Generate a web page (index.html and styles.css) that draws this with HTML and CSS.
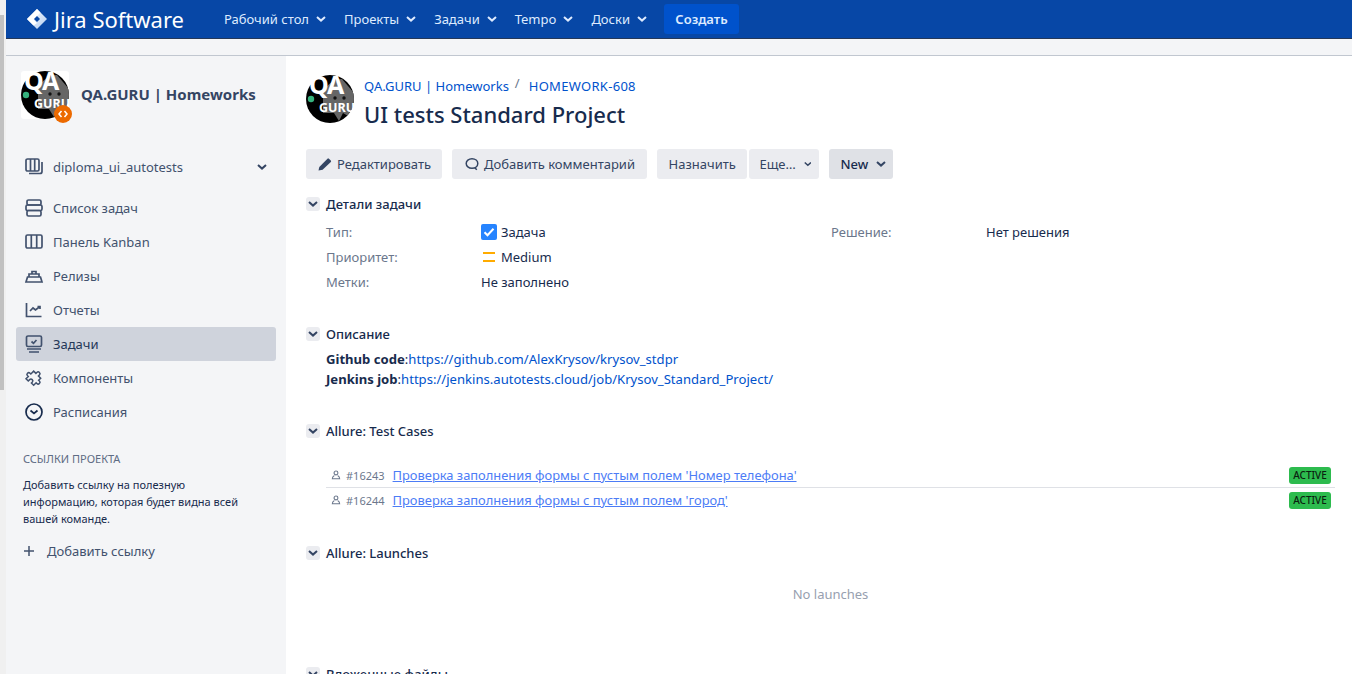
FILE: index.html
```html
<!DOCTYPE html>
<html lang="en">
<head>
  <meta charset="UTF-8" />
  <title>UI tests Standard Project</title>
  <link rel="stylesheet" href="styles.css">
</head>
<body>
  <svg class="svg-defs" width="0" height="0">
    <defs>
      <clipPath id="qa-clip"><circle cx="24" cy="24" r="24"/></clipPath>
      <linearGradient id="jira-fade" x1="0" y1="0" x2="1" y2="1">
        <stop offset="0" stop-color="#fff"/>
        <stop offset="1" stop-color="#b3cdf0"/>
      </linearGradient>
      <g id="qa-logo">
        <circle cx="24" cy="24" r="24" fill="#000"/>
        <path clip-path="url(#qa-clip)" d="M17 18 C20 10 28 4 36 4 L48 18 L48 32 L42 41 L37 38 L33 46 L28 38 L17 38 Z" fill="#666"/>
        <circle cx="5" cy="24" r="3.200" fill="#36b37e"/>
        <circle cx="29" cy="23" r="1.700" fill="#111"/>
        <circle cx="38" cy="23" r="1.700" fill="#111"/>
        <text x="3" y="19" class="logo-qa">Q</text>
        <text x="21" y="19" class="logo-qa">A</text>
        <text x="13" y="37" class="logo-guru">GURU</text>
      </g>
    </defs>
  </svg>

  <div class="gutter"><div class="gutter-thumb"></div></div>

  <div class="app">
    <header class="topbar">
      <a class="brand">
        <svg class="brand-icon" viewBox="0 0 22 22"><path d="M11 1 L21 11 L11 21 L1 11 Z" fill="url(#jira-fade)"/><path d="M11 1 L14.500 4.500 L7.500 11.500 L11 15 L7.500 17.500 L1 11 Z" fill="#fff"/><path d="M11 8 L14 11 L11 14 L8 11 Z" fill="#0747a6"/></svg>
        <span>Jira Software</span>
      </a>
      <nav class="topnav">
        <a>Рабочий стол <svg class="chev" viewBox="0 0 10 6"><path d="M1 1l4 3.6L9 1"/></svg></a>
        <a>Проекты <svg class="chev" viewBox="0 0 10 6"><path d="M1 1l4 3.6L9 1"/></svg></a>
        <a>Задачи <svg class="chev" viewBox="0 0 10 6"><path d="M1 1l4 3.6L9 1"/></svg></a>
        <a>Tempo <svg class="chev" viewBox="0 0 10 6"><path d="M1 1l4 3.6L9 1"/></svg></a>
        <a>Доски <svg class="chev" viewBox="0 0 10 6"><path d="M1 1l4 3.6L9 1"/></svg></a>
      </nav>
      <button class="create-btn">Создать</button>
    </header>
    <div class="subbar"></div>

    <div class="content">
      <aside class="sidebar">
        <div class="project">
          <div class="project-avatar">
            <svg width="48" height="48" viewBox="0 0 48 48"><use href="#qa-logo"/></svg>
            <span class="project-badge"><svg width="12" height="12" viewBox="0 0 12 12"><path d="M4.500 3 L2 6 L4.500 9 M7.500 3 L10 6 L7.500 9"/></svg></span>
          </div>
          <span class="project-name">QA.GURU | Homeworks</span>
        </div>

        <div class="board-select">
          <svg class="nav-icon" viewBox="0 0 20 20"><rect x="2" y="2" width="13" height="12" rx="1.500"/><path d="M6.500 2v12M10.700 2v12M18 5v9.500a2 2 0 0 1-2 2H5"/></svg>
          <span class="board-name">diploma_ui_autotests</span>
          <svg class="chev dark" viewBox="0 0 10 6"><path d="M1 1l4 3.6L9 1"/></svg>
        </div>

        <ul class="side-nav">
          <li><svg class="nav-icon" viewBox="0 0 20 20"><rect x="3" y="2" width="14" height="5" rx="1.500"/><rect x="2" y="7" width="16" height="5.500" rx="1.500"/><rect x="3" y="12.500" width="14" height="5.500" rx="1.500"/></svg>Список задач</li>
          <li><svg class="nav-icon" viewBox="0 0 20 20"><rect x="2" y="3" width="16" height="13" rx="1.500"/><path d="M7.300 3v13M12.700 3v13"/></svg>Панель Kanban</li>
          <li><svg class="nav-icon" viewBox="0 0 20 20"><path d="M2 16h16l-1.500-5h-13zM5 11V8h10v3M8 8V5.500h4V8"/></svg>Релизы</li>
          <li><svg class="nav-icon" viewBox="0 0 20 20"><path d="M2.500 3v13.500h15M6 11l3-3 2.500 2L16 6.500M13.500 6.500H16V9"/></svg>Отчеты</li>
          <li class="active"><svg class="nav-icon" viewBox="0 0 20 20"><rect x="2.500" y="2" width="15" height="10.500" rx="1.500"/><path d="M7.500 7.500l2 1.800 3-3.300M3 15h14M5 18h10"/></svg>Задачи</li>
          <li><svg class="nav-icon" viewBox="0 0 20 20"><path d="M8 3.500a2 2 0 0 1 4 0V5h3.500v3.200h1.200a2 2 0 0 1 0 4h-1.200V16H12v-1.200a2 2 0 0 0-4 0V17H4.500v-3.500H3.300a2 2 0 0 1 0-4h1.200V5H8z" transform="rotate(45 10 10) scale(.9) translate(1 1)"/></svg>Компоненты</li>
          <li><svg class="nav-icon black" viewBox="0 0 20 20"><circle cx="10" cy="10" r="8"/><path d="M6.500 8.500l3.500 3 3.500-3"/></svg>Расписания</li>
        </ul>

        <div class="side-links">
          <h4>ССЫЛКИ ПРОЕКТА</h4>
          <p>Добавить ссылку на полезную информацию, которая будет видна всей вашей команде.</p>
          <a class="add-link"><svg viewBox="0 0 12 12"><path d="M6 1v10M1 6h10"/></svg>Добавить ссылку</a>
        </div>
      </aside>

      <main class="issue">
        <div class="issue-head">
          <svg class="issue-avatar" width="48" height="48" viewBox="0 0 48 48"><use href="#qa-logo"/></svg>
          <div>
            <div class="crumbs"><a>QA.GURU | Homeworks</a><span class="sep">/</span><a class="issue-key">HOMEWORK-608</a></div>
            <h1>UI tests Standard Project</h1>
          </div>
        </div>

        <div class="toolbar">
          <button class="btn"><svg class="btn-icon" viewBox="0 0 14 14"><path class="fill" d="M0.500 13.500l.8-3.600L9.500 1.700a1 1 0 0 1 1.400 0l1.900 1.900a1 1 0 0 1 0 1.400L4.600 12.700z"/></svg>Редактировать</button>
          <button class="btn comment"><svg class="btn-icon" viewBox="0 0 14 14"><path class="line" d="M7 1.800c3.300 0 5.800 2 5.800 4.700s-2.500 4.700-5.800 4.700c-3.300 0-5.800-2-5.800-4.700S3.700 1.800 7 1.800zM9.500 10.500l2.300 2.300"/></svg>Добавить комментарий</button>
          <div class="btn-group">
            <button class="btn assign">Назначить</button>
            <button class="btn more">Еще… <svg class="chev dark" viewBox="0 0 10 6"><path d="M1 1l4 3.6L9 1"/></svg></button>
          </div>
          <button class="btn status">New <svg class="chev dark" viewBox="0 0 10 6"><path d="M1 1l4 3.6L9 1"/></svg></button>
        </div>

        <section class="module details">
          <h3 class="module-head"><span class="twixie"><svg class="chev dark" viewBox="0 0 10 6"><path d="M1 1l4 3.6L9 1"/></svg></span>Детали задачи</h3>
          <div class="details-grid">
            <span class="label">Тип:</span>
            <span class="value"><svg class="type-icon" width="16" height="16" viewBox="0 0 16 16"><rect width="16" height="16" rx="2" fill="#2684ff"/><path d="M3.500 8.200l3 3 6-6.400" fill="none" stroke="#fff" stroke-width="2"/></svg>Задача</span>
            <span class="label">Решение:</span>
            <span class="value">Нет решения</span>
            <span class="label">Приоритет:</span>
            <span class="value"><svg class="type-icon" width="16" height="16" viewBox="0 0 16 16"><path d="M2 4h12M2 12h12" stroke="#ffab00" stroke-width="2"/></svg>Medium</span>
            <span></span><span></span>
            <span class="label">Метки:</span>
            <span class="value">Не заполнено</span>
          </div>
        </section>

        <section class="module description">
          <h3 class="module-head"><span class="twixie"><svg class="chev dark" viewBox="0 0 10 6"><path d="M1 1l4 3.6L9 1"/></svg></span>Описание</h3>
          <p><b>Github code</b>:<a>https://github.com/AlexKrysov/krysov_stdpr</a></p>
          <p><b>Jenkins job</b>:<a>https://jenkins.autotests.cloud/job/Krysov_Standard_Project/</a></p>
        </section>

        <section class="module cases">
          <h3 class="module-head"><span class="twixie"><svg class="chev dark" viewBox="0 0 10 6"><path d="M1 1l4 3.6L9 1"/></svg></span>Allure: Test Cases</h3>
          <div class="case-row">
            <svg class="case-icon" viewBox="0 0 12 12"><circle cx="6" cy="3.500" r="2.300"/><path d="M1.500 11c0-2.500 1.500-4 2.500-4.500M10.500 11c0-2.500-1.500-4-2.500-4.500M1.500 10.500h9"/></svg>
            <span class="case-id">#16243</span>
            <a class="case-link">Проверка заполнения формы с пустым полем 'Номер телефона'</a>
            <span class="case-status">ACTIVE</span>
          </div>
          <div class="case-row">
            <svg class="case-icon" viewBox="0 0 12 12"><circle cx="6" cy="3.500" r="2.300"/><path d="M1.500 11c0-2.500 1.500-4 2.500-4.500M10.500 11c0-2.500-1.500-4-2.500-4.500M1.500 10.500h9"/></svg>
            <span class="case-id">#16244</span>
            <a class="case-link">Проверка заполнения формы с пустым полем 'город'</a>
            <span class="case-status">ACTIVE</span>
          </div>
        </section>

        <section class="module launches">
          <h3 class="module-head"><span class="twixie"><svg class="chev dark" viewBox="0 0 10 6"><path d="M1 1l4 3.6L9 1"/></svg></span>Allure: Launches</h3>
          <div class="empty">No launches</div>
        </section>

        <section class="module files">
          <h3 class="module-head"><span class="twixie"><svg class="chev dark" viewBox="0 0 10 6"><path d="M1 1l4 3.6L9 1"/></svg></span>Вложенные файлы</h3>
        </section>
      </main>
    </div>
  </div>
</body>
</html>
```

FILE: styles.css
```css
* {
  box-sizing: border-box;
}

html, body {
  height: 674px;
  overflow: hidden;
}

body {
  margin: 0;
  display: flex;
  font-family: "Noto Sans", sans-serif;
  font-size: 13px;
  color: #172b4d;
  background: #fff;
}

.svg-defs {
  position: absolute;
}

.logo-qa {
  font: 700 25px "Noto Sans", sans-serif;
  fill: #fff;
}

.logo-guru {
  font: 700 12.500px "Noto Sans", sans-serif;
  fill: #fff;
}

.gutter {
  width: 6px;
  flex: none;
  background: #f0f0f0;
  padding-top: 15px;
}

.gutter-thumb {
  width: 4px;
  height: 375px;
  background: #c1c1c1;
}

.app {
  flex: 1;
  min-width: 0;
  display: flex;
  flex-direction: column;
}

/* top bar */
.topbar {
  height: 39px;
  flex: none;
  display: flex;
  align-items: center;
  padding-left: 20px;
  background: #0747a6;
  border-bottom: 1px solid #253858;
  color: #deebff;
}

.brand {
  display: flex;
  align-items: center;
  gap: 6px;
  color: #fff;
  font-size: 22px;
  width: 198px;
}

.brand-icon {
  width: 22px;
  height: 22px;
}

.topnav {
  display: flex;
  gap: 18px;
  font-size: 13px;
}

.topnav a {
  display: flex;
  align-items: center;
  gap: 7px;
}

.chev {
  width: 10px;
  height: 6px;
  fill: none;
  stroke: #deebff;
  stroke-width: 2;
}

.chev.dark {
  stroke: #344563;
}

.create-btn {
  margin-left: 17px;
  height: 30px;
  width: 75px;
  border: 0;
  border-radius: 3px;
  background: #0052cc;
  color: #deebff;
  font: 600 13px "Noto Sans", sans-serif;
}

.subbar {
  height: 17px;
  flex: none;
  background: #f4f5f7;
  border-bottom: 1px solid #c1c7d0;
}

.content {
  flex: 1;
  display: flex;
  min-height: 0;
}

/* sidebar */
.sidebar {
  width: 280px;
  flex: none;
  background: #f4f5f7;
  padding: 15px 10px 0;
  color: #42526e;
}

.project {
  display: flex;
  align-items: center;
  gap: 12px;
  padding-left: 5px;
  height: 48px;
}

.project-avatar {
  position: relative;
  width: 48px;
  height: 48px;
  background: #fff;
  border-radius: 3px;
}

.project-badge {
  position: absolute;
  right: -3px;
  bottom: -4px;
  width: 18px;
  height: 18px;
  display: flex;
  align-items: center;
  justify-content: center;
  border-radius: 50%;
  background: #ec6a00;
}

.project-badge path {
  fill: none;
  stroke: #fff;
  stroke-width: 1.500;
}

.project-name {
  font-size: 15px;
  font-weight: 700;
  color: #344563;
  margin-top: -2px;
}

.board-select {
  display: flex;
  align-items: center;
  margin-top: 31px;
  height: 34px;
  padding: 0 9px 0 8px;
}

.board-name {
  flex: 1;
}

.nav-icon {
  width: 20px;
  height: 20px;
  margin-right: 9px;
  flex: none;
  fill: none;
  stroke: #42526e;
  stroke-width: 1.700;
}

.nav-icon.black {
  stroke: #172b4d;
}

.side-nav {
  list-style: none;
  margin: 7px 0 0;
  padding: 0;
}

.side-nav li {
  display: flex;
  align-items: center;
  height: 34px;
  padding-left: 8px;
  border-radius: 3px;
}

.side-nav li.active {
  background: #cfd3dc;
  color: #253858;
}

.side-links {
  padding: 22px 7px 0;
}

.side-links h4 {
  margin: 0;
  font-size: 11px;
  font-weight: 400;
  color: #5e6c84;
  line-height: 16px;
}

.side-links p {
  width: 232px;
  margin: 9px 0 0;
  font-size: 11px;
  line-height: 17px;
  color: #172b4d;
}

.add-link {
  display: flex;
  align-items: center;
  gap: 12px;
  margin-top: 15px;
  font-size: 13px;
  color: #42526e;
}

.add-link svg {
  width: 12px;
  height: 12px;
  fill: none;
  stroke: #42526e;
  stroke-width: 1.500;
}

/* issue */
.issue {
  flex: 1;
  min-width: 0;
  padding: 19px 17px 0 20px;
}

.issue-head {
  display: flex;
  gap: 10px;
  height: 48px;
}

.issue-avatar {
  flex: none;
}

.crumbs {
  display: flex;
  font-size: 13px;
  line-height: 22px;
  color: #0052cc;
}

.crumbs .sep {
  color: #6b778c;
  margin: -3px 9px 0 6px;
}

.issue-key {
  letter-spacing: .3px;
}

h1 {
  margin: 1px 0 0;
  font-size: 22px;
  font-weight: 500;
  line-height: 32px;
  color: #172b4d;
}

.toolbar {
  display: flex;
  gap: 10px;
  margin-top: 26px;
}

.btn {
  height: 30px;
  padding: 0 11px 0 12px;
  display: inline-flex;
  align-items: center;
  gap: 5px;
  border: 0;
  border-radius: 3px;
  background: #ebecf0;
  color: #344563;
  font: 13px "Noto Sans", sans-serif;
}

.btn.comment {
  width: 195px;
  padding-left: 13px;
}

.btn.assign {
  padding: 0 11.500px;
}

.btn.more {
  width: 70px;
  padding: 0 8px 0 10px;
  gap: 8px;
}

.btn.status {
  width: 64px;
  padding: 0 6px 0 11px;
  gap: 8px;
  background: #dfe1e6;
  color: #172b4d;
  font-weight: 500;
}

.btn-icon {
  width: 14px;
  height: 14px;
}

.btn-icon .fill {
  fill: #344563;
}

.btn-icon .line {
  fill: none;
  stroke: #344563;
  stroke-width: 1.500;
}

.btn-group {
  display: flex;
  gap: 2px;
}

.module-head {
  display: flex;
  align-items: center;
  gap: 6px;
  margin: 0;
  height: 20px;
  font-size: 13px;
  font-weight: 500;
  color: #172b4d;
}

.twixie {
  width: 14px;
  height: 14px;
  display: flex;
  align-items: center;
  justify-content: center;
  border-radius: 3px;
  background: #ebecf0;
}

.details {
  margin-top: 15px;
}

.details-grid {
  display: grid;
  grid-template-columns: 155px 350px 155px 1fr;
  grid-auto-rows: 25px;
  align-items: center;
  margin: 5px 0 0 20px;
}

.label {
  color: #6b778c;
}

.value {
  display: flex;
  align-items: center;
  gap: 4px;
}

.description {
  margin-top: 30px;
}

.description p {
  margin: 0 0 0 20px;
  font-size: 13.100px;
  line-height: 20px;
}

.description .module-head {
  margin-bottom: 5px;
}

.description b {
  font-weight: 700;
}

.description a {
  color: #0052cc;
}

.cases {
  margin-top: 32px;
}

.cases .module-head {
  margin-bottom: 22px;
}

.case-row {
  display: flex;
  align-items: center;
  height: 24px;
  margin-left: 20px;
  padding: 0 4px 0 5px;
  font-size: 12.900px;
}

.case-row + .case-row {
  height: 25px;
  border-top: 1px solid #dfe1e6;
}

.case-icon {
  width: 10px;
  height: 10px;
  margin-right: 5px;
  fill: none;
  stroke: #6b778c;
  stroke-width: 1.300;
}

.case-id {
  color: #6b778c;
  font-size: 11px;
  margin-right: 8px;
}

.case-link {
  flex: 1;
  color: #4c7cf6;
  text-decoration: underline;
}

.case-status {
  width: 42px;
  height: 17px;
  line-height: 17px;
  text-align: center;
  border-radius: 3px;
  background: #2dbb4e;
  color: #0b1f10;
  font-size: 10px;
  font-weight: 500;
}

.launches {
  margin-top: 31px;
}

.empty {
  margin: 21px 0 0 20px;
  text-align: center;
  color: #97a0af;
  line-height: 20px;
}

.files {
  margin-top: 60px;
}
```
